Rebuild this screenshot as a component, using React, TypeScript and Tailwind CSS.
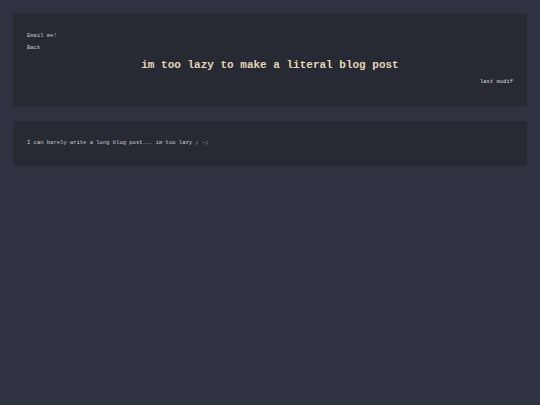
export default function App() {
  return (
    <div className="min-h-screen bg-[#2f3240] p-[13px] flex flex-col gap-[14px] font-['Liberation_Mono',monospace]">
      <div className="bg-[#282a33] px-[14px] pt-[19px] pb-[21px] flex flex-col">
        <a className="text-[5.5px] leading-[8px] text-[#c9c9cf]">Email me!</a>
        <a className="mt-[4px] text-[5.5px] leading-[8px] text-[#c9c9cf]">Back</a>
        <h1 className="mt-[5px] text-center text-[11px] leading-[16px] font-bold text-[#e3d6b6]">
          im too lazy to make a literal blog post
        </h1>
        <p className="mt-[5px] text-right text-[5.5px] leading-[8px] text-[#d6d6d6]">last modif</p>
      </div>
      <div className="bg-[#282a33] px-[14px] pt-[18px] pb-[19px]">
        <p className="text-[5.5px] leading-[8px] text-[#c9c9cf]">
          I can barely write a long blog post... im too lazy ; -;
        </p>
      </div>
    </div>
  );
}
